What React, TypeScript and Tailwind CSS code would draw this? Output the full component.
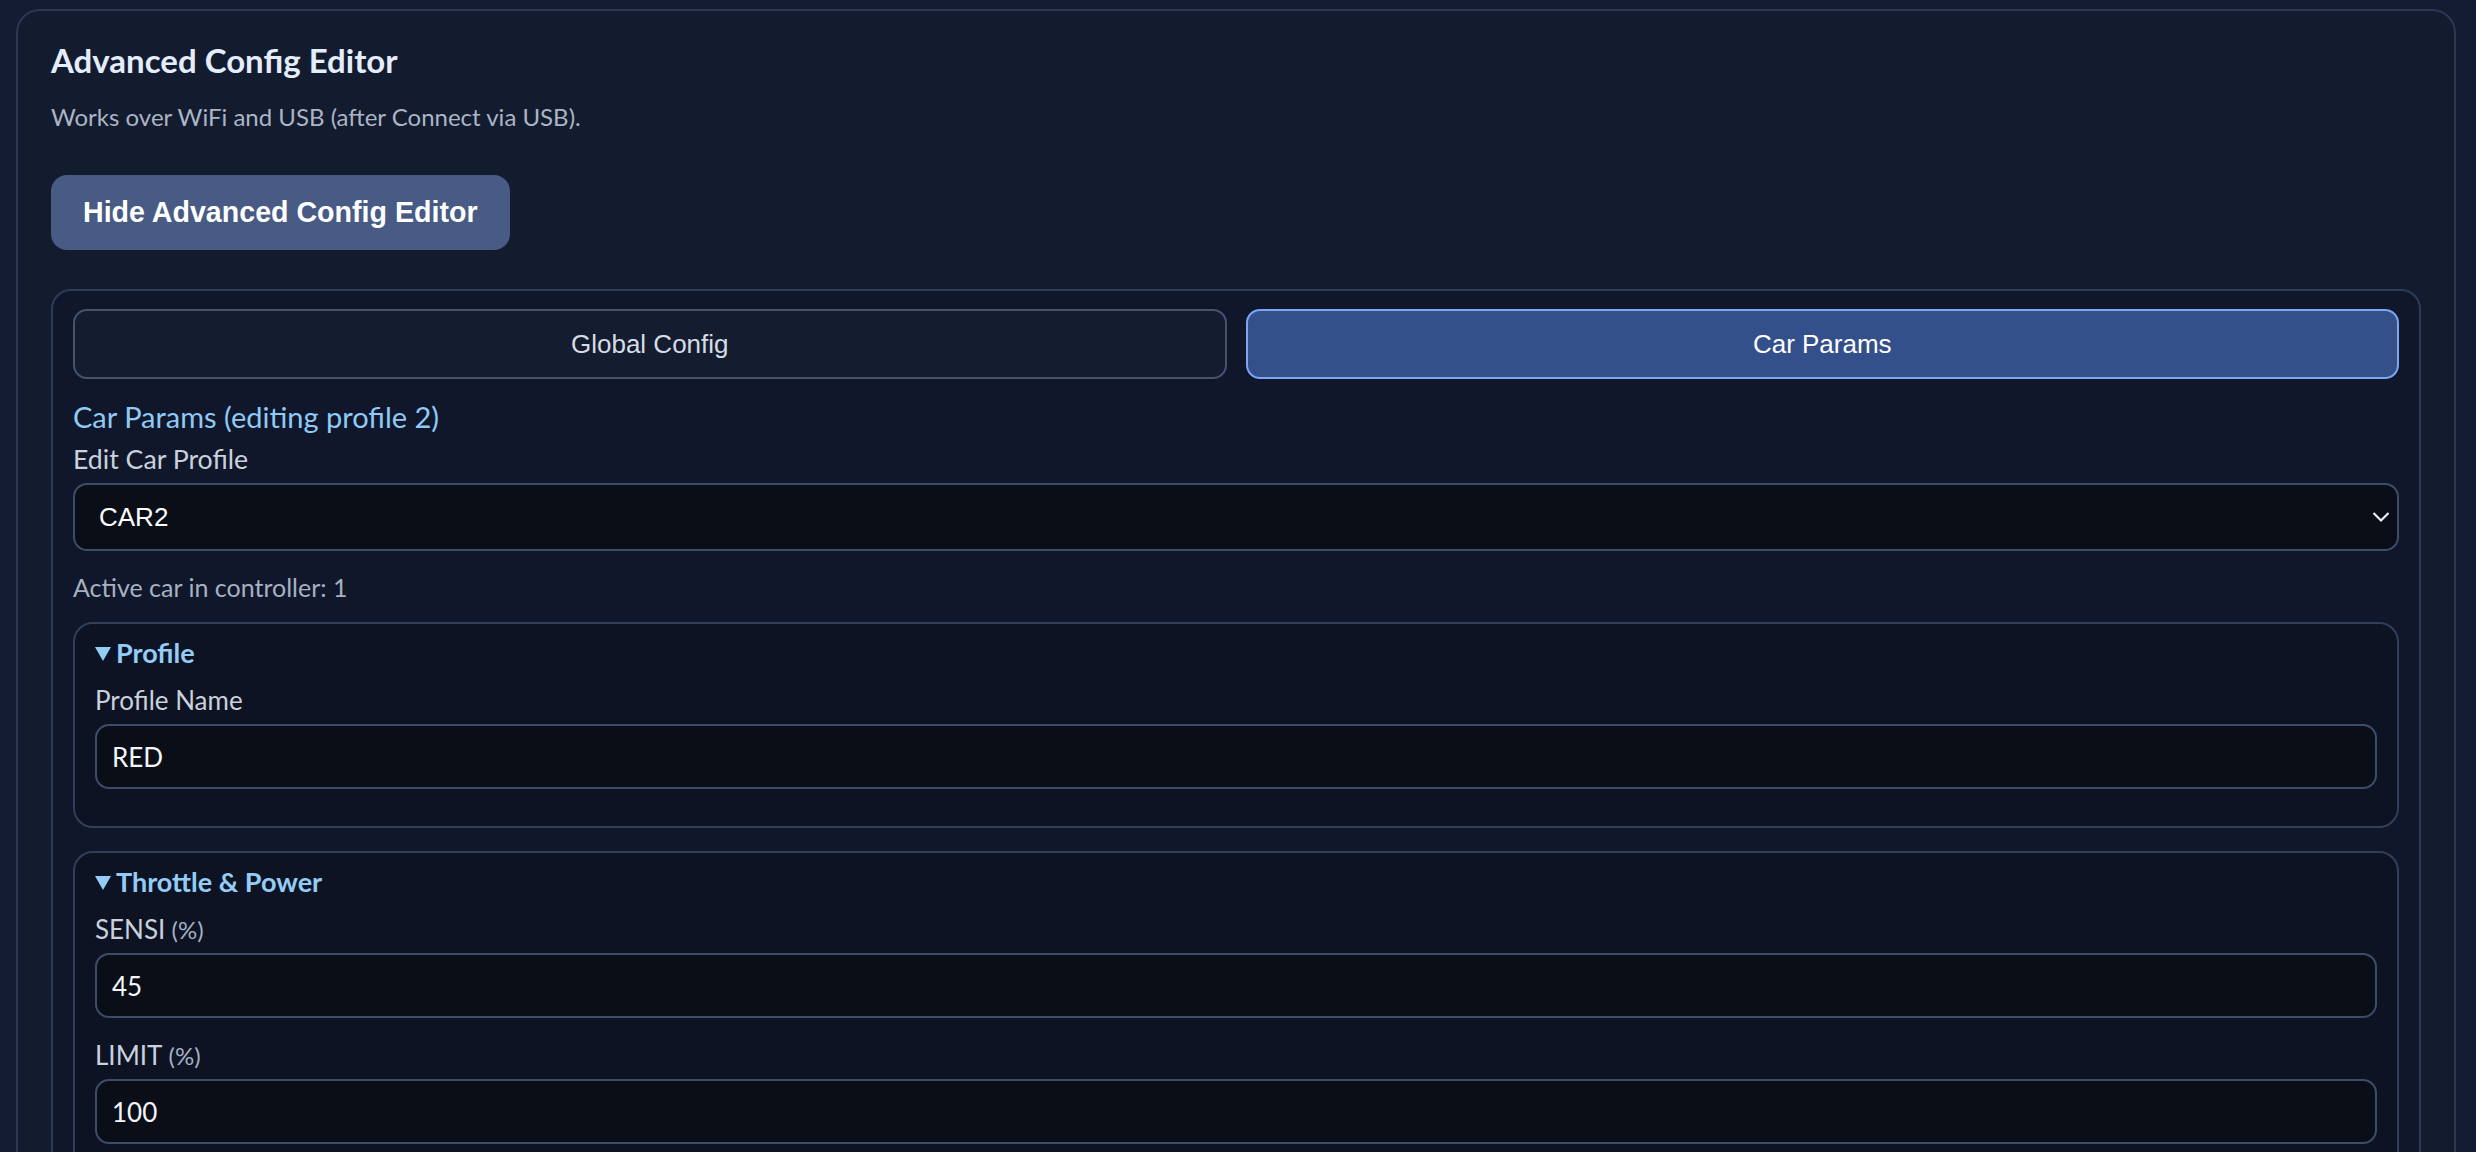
import React, { useState } from "react";

const body = "font-['Lato','Liberation_Sans',sans-serif]";
const control = "font-['Liberation_Sans',Arial,sans-serif]";

const Triangle = () => (
  <svg width="16" height="15" viewBox="0 0 16 15" className="mr-[5px] shrink-0">
    <path d="M0 1 L16 1 L8 15 Z" fill="#93cdf7" />
  </svg>
);

const Field = ({ label, unit, value, first }: { label: string; unit?: string; value: string; first?: boolean }) => (
  <div className={first ? "mt-[11px]" : "mt-[19px]"}>
    <div className="h-[36px] leading-[36px] text-[26px] text-[#c9d1dd]">
      {label}
      {unit && <span className="text-[24px] text-[#a3b0c4]"> {unit}</span>}
    </div>
    <input
      readOnly
      value={value}
      className="mt-[6px] block w-full h-[65px] rounded-[14px] border-2 border-[#3c4d6c] bg-[#0a0e17] px-[15px] text-[26px] leading-[32px] text-[#f2f5fa] outline-none"
    />
  </div>
);

const Group = ({ title, children, className = "" }: { title: string; children: React.ReactNode; className?: string }) => (
  <div className={`rounded-[20px] border-2 border-[#323f5a] bg-[#0d1322] px-[20px] pt-[11px] pb-[37px] ${className}`}>
    <div className="h-[36px] flex items-center text-[27px] font-bold text-[#93cdf7]">
      <Triangle />
      {title}
    </div>
    {children}
  </div>
);

export default function App() {
  const [tab, setTab] = useState("car");

  return (
    <div className={`h-[1152px] overflow-hidden bg-[#141c33] pt-[9px] pl-4 pr-[20px] ${body}`}>
      <div className="rounded-[24px] border-2 border-[#2a3854] bg-[#131b2f] px-[33px] pt-[28px] pb-10">
        <h2 className="h-[43px] leading-[43px] text-[33px] font-bold text-[#e4edfb]">Advanced Config Editor</h2>
        <p className="mt-[17px] h-[36px] leading-[36px] text-[24px] text-[#aab5c6]">
          Works over WiFi and USB (after Connect via USB).
        </p>

        <button
          className={`mt-[40px] h-[75px] px-[32px] rounded-[16px] bg-[#475b85] text-white text-[28.6px] font-bold ${control}`}
        >
          Hide Advanced Config Editor
        </button>

        <div className="mt-[39px] rounded-[20px] border-2 border-[#2d3b58] bg-[#10172a] px-[20px] pt-[18px] pb-10">
          <div className="grid grid-cols-2 gap-[19px]">
            <button
              onClick={() => setTab("global")}
              className={`h-[70px] rounded-[14px] border-2 text-[26px] ${control} ${
                tab === "global"
                  ? "bg-[#34508a] border-[#7da4f5] text-white"
                  : "bg-[#141c2f] border-[#465370] text-[#d6dce6]"
              }`}
            >
              Global Config
            </button>
            <button
              onClick={() => setTab("car")}
              className={`h-[70px] rounded-[14px] border-2 text-[26px] ${control} ${
                tab === "car"
                  ? "bg-[#34508a] border-[#7da4f5] text-white"
                  : "bg-[#141c2f] border-[#465370] text-[#d6dce6]"
              }`}
            >
              Car Params
            </button>
          </div>

          <div className="mt-[20px] h-[36px] leading-[36px] text-[29px] text-[#8fcaf6]">
            Car Params (editing profile 2)
          </div>
          <div className="mt-[6px] h-[36px] leading-[36px] text-[26.7px] text-[#c9d1dd]">Edit Car Profile</div>
          <div className="mt-[6px] relative h-[68px] rounded-[14px] border-2 border-[#3c4d6c] bg-[#0a0e17] flex items-center px-[24px]">
            <span className={`text-[26px] leading-none text-white ${control}`}>CAR2</span>
            <svg
              width="18"
              height="11"
              viewBox="0 0 18 11"
              className="absolute right-[7px] top-1/2 -translate-y-1/2"
            >
              <path d="M1.5 1.5 L9 9 L16.5 1.5" fill="none" stroke="#e8edf5" strokeWidth="2.2" />
            </svg>
          </div>
          <div className="mt-[18px] h-[36px] leading-[36px] text-[25px] text-[#a6b1c2]">Active car in controller: 1</div>

          <Group title="Profile" className="mt-[17px]">
            <Field label="Profile Name" value="RED" first />
          </Group>

          <Group title="Throttle & Power" className="mt-[23px]">
            <Field label="SENSI" unit="(%)" value="45" first />
            <Field label="LIMIT" unit="(%)" value="100" />
          </Group>
        </div>
      </div>
    </div>
  );
}
